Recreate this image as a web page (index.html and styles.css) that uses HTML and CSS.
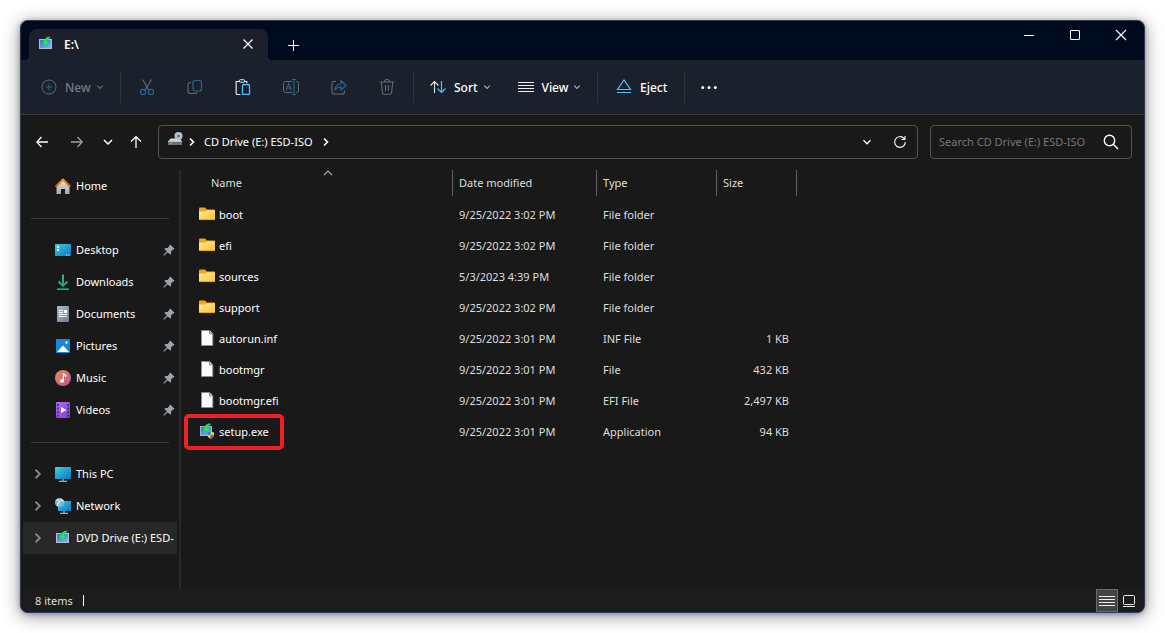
FILE: index.html
```html
<!DOCTYPE html>
<html lang="en">
<head>
<meta charset="utf-8">
<title>E:\</title>
<link rel="stylesheet" href="styles.css">
</head>
<body>
<svg class="sprite" aria-hidden="true">
  <defs>
    <linearGradient id="gScreen" x1="0" y1="0" x2="1" y2="1"><stop offset="0" stop-color="#35d3e0"/><stop offset="1" stop-color="#0f73c4"/></linearGradient>
    <linearGradient id="gInstall" x1="0" y1="0" x2="1" y2="1"><stop offset="0" stop-color="#3f78cc"/><stop offset="1" stop-color="#7db2f2"/></linearGradient>
    <linearGradient id="gFolder" x1="0" y1="0" x2="1" y2="1"><stop offset="0" stop-color="#ffe9a0"/><stop offset="1" stop-color="#fcc234"/></linearGradient>
    <linearGradient id="gGreen" x1="0" y1="0" x2="0" y2="1"><stop offset="0" stop-color="#3ccb88"/><stop offset="1" stop-color="#13a884"/></linearGradient>
    <linearGradient id="gDoc" x1="0" y1="0" x2="1" y2="1"><stop offset="0" stop-color="#a9bccf"/><stop offset="1" stop-color="#64809c"/></linearGradient>
    <linearGradient id="gMusic" x1="0" y1="0" x2="1" y2="1"><stop offset="0" stop-color="#f08a4c"/><stop offset="1" stop-color="#b0599e"/></linearGradient>
    <linearGradient id="gVideo" x1="0" y1="0" x2="1" y2="1"><stop offset="0" stop-color="#b36bf2"/><stop offset="1" stop-color="#7c3fd6"/></linearGradient>
    <linearGradient id="gRoof" x1="0" y1="0" x2="0" y2="1"><stop offset="0" stop-color="#f79a1e"/><stop offset="1" stop-color="#d9530c"/></linearGradient>
    <linearGradient id="gWall" x1="0" y1="0" x2="0" y2="1"><stop offset="0" stop-color="#dedede"/><stop offset="1" stop-color="#a8a8a8"/></linearGradient>
  </defs>
  <symbol id="install" viewBox="0 0 16 16">
    <rect x="1" y="3" width="13" height="10" fill="#b4bfce"/><rect x="2" y="4" width="11" height="8" fill="url(#gInstall)"/>
    <path d="M12 .8C8.500.9 6.300 2.600 6 5.500H3.800L7.500 10l4-4.500H9C9.200 3.800 10 2.600 12 2z" fill="#1ff060" stroke="#16a548" stroke-width=".4"/>
  </symbol>
  <symbol id="setup" viewBox="0 0 16 16">
    <rect x="1" y="3" width="12" height="10" fill="#9fb2cc"/><rect x="2" y="4" width="10" height="8" fill="url(#gInstall)"/>
    <path d="M11.500.5C8 .6 5.800 2.300 5.500 5.200H3.300L7 9.500l4-4.300H8.500c.2-1.700 1-2.900 3-3.500z" fill="#1ff060" stroke="#16a548" stroke-width=".4"/>
    <path d="M8.500 9.500l3.200-1.200V12H8.500z" fill="#2a82dc"/><path d="M11.700 8.300L15 9.500V12h-3.300z" fill="#ffc71f"/>
    <path d="M8.500 12h3.200v4c-2-.8-3.200-2.200-3.200-4z" fill="#ffc71f"/><path d="M15 12h-3.300v4c2-.8 3.300-2.200 3.300-4z" fill="#2a82dc"/>
  </symbol>
  <symbol id="folder" viewBox="0 0 16 16">
    <path d="M0 2.500C0 2 .4 1.500 1 1.500h5l1.800 2H15c.6 0 1 .4 1 1V8H0z" fill="#f0a80c"/>
    <path d="M0 5.500h6.500L8 4.200h8V13c0 .6-.4 1-1 1H1c-.6 0-1-.4-1-1z" fill="url(#gFolder)"/>
    <path d="M.3 13.600h15.400" stroke="#d99a15" stroke-width=".8"/>
  </symbol>
  <symbol id="file" viewBox="0 0 16 16">
    <path d="M2.500.5h8l3.300 3.300v11.700H2.500z" fill="#fafafa" stroke="#8b8b8b"/><path d="M10.500.5v3.300h3.300" fill="#d6d6d6" stroke="#777" stroke-width=".9"/>
  </symbol>
  <symbol id="home" viewBox="0 0 16 16">
    <path d="M1.500 8L8 2.500 14.500 8v8H10v-5H6v5H1.500z" fill="url(#gWall)"/>
    <path d="M1 8.200l7-6.700 7 6.700" fill="none" stroke="url(#gRoof)" stroke-width="1.900" stroke-linecap="round" stroke-linejoin="round"/>
  </symbol>
  <symbol id="desktop" viewBox="0 0 16 16">
    <rect y="2" width="16" height="12" rx="1" fill="url(#gScreen)"/>
    <path d="M2 4h2v2H2zM2 7h2v2H2z" fill="#fff"/><path d="M11 13h1.200M13.300 13h1.200" stroke="#e8f6ff"/>
  </symbol>
  <symbol id="download" viewBox="0 0 16 16">
    <path d="M8 .5v11M3.500 7.500L8 12l4.500-4.500" fill="none" stroke="url(#gGreen)" stroke-width="1.800"/><path d="M2 15.200h12" stroke="#20b783" stroke-width="1.500"/>
  </symbol>
  <symbol id="document" viewBox="0 0 16 16">
    <rect x="2" width="12" height="16" rx="1" fill="url(#gDoc)"/>
    <path d="M4 4.500h4M4 6.500h4M4 8.500h8M4 10.500h8" stroke="#fff"/><rect x="9" y="4" width="3" height="3" fill="#fff"/>
  </symbol>
  <symbol id="picture" viewBox="0 0 16 16">
    <rect x="1" y="1" width="14" height="14" rx="1" fill="#1688d8"/><path d="M2 14l6-6.500 6 6.500z" fill="#fff"/><circle cx="11.500" cy="4.500" r="1.300" fill="#e6f5ff"/>
  </symbol>
  <symbol id="music" viewBox="0 0 16 16">
    <circle cx="8" cy="8" r="8" fill="url(#gMusic)"/><ellipse cx="7" cy="11" rx="2" ry="1.700" fill="#fff"/><path d="M8.400 11V3.500c.4 1.300 1.200 1.600 2.300 1.900V7" fill="none" stroke="#fff" stroke-width="1.200"/>
  </symbol>
  <symbol id="video" viewBox="0 0 16 16">
    <rect x="1" width="14" height="16" rx="1" fill="url(#gVideo)"/><path d="M6 5l5.500 3L6 11z" fill="#fff"/>
    <path d="M2.800 2v13M13.200 2v13" stroke="#43207c" stroke-width="1.600" stroke-dasharray="2 1.600"/>
  </symbol>
  <symbol id="pc" viewBox="0 0 16 16">
    <rect y="1" width="16" height="12" rx=".6" fill="url(#gScreen)"/><path d="M8 13v2M4 15.300h8" stroke="#a3adb5" stroke-width="1.300"/>
  </symbol>
  <symbol id="network" viewBox="0 0 16 16">
    <rect x="3" y="3" width="13" height="10" fill="url(#gScreen)"/><path d="M9 13v2M5 15.300h8" stroke="#a3adb5" stroke-width="1.300"/>
    <circle cx="4.500" cy="4.500" r="4.500" fill="#86b7d1"/><path d="M1.500 2.500C4 1 5.500 3 4 4.500S2 6.500 2.500 8M6 1c0 1.600 1 2 2.600 2" fill="none" stroke="#d8edf5" stroke-width="1.300"/>
  </symbol>
  <symbol id="drive" viewBox="0 0 16 16">
    <path d="M3.500 6.500h9.500l2 3.500H1z" fill="#d2d5d8"/>
    <circle cx="11.500" cy="4" r="4" fill="#b9c1c7"/><circle cx="11.500" cy="4" r="1.300" fill="#56606a"/>
    <path d="M1 9h14v4H1z" fill="#6a7074"/><path d="M1 9.300h14" stroke="#e2e4e6" stroke-width=".8"/><rect x="3" y="10.500" width="2" height="1.200" fill="#35e05c"/>
  </symbol>
  <symbol id="pin" viewBox="0 0 12 12">
    <path d="M7.200.5l4.300 4.300-1 .9-.6-.1-1.800 1.900v2.200l-1 .9-2.400-2.400L1.200 11.500l-.8.100.1-.8 3.300-3.500L1.400 5l.9-1h2.200l1.900-1.900-.1-.6z" fill="#98a4ae"/>
  </symbol>
  <symbol id="chevR" viewBox="0 0 10 10"><path d="M3 1.500L6.500 5 3 8.500" fill="none" stroke="currentColor" stroke-width="1.600"/></symbol>
  <symbol id="chevD" viewBox="0 0 10 10"><path d="M1.500 3.300L5 6.800l3.500-3.500" fill="none" stroke="currentColor" stroke-width="1.300"/></symbol>
</svg>

<div class="window">
  <header class="titlebar">
    <div class="tab">
      <svg class="i16"><use href="#install"/></svg>
      <span class="tab-title">E:\</span>
      <button class="plain" aria-label="Close tab"><svg class="i12" viewBox="0 0 12 12"><path d="M1.500 1.500l9 9M10.500 1.500l-9 9" stroke="#fff" stroke-width="1.200"/></svg></button>
    </div>
    <button class="plain new-tab" aria-label="New tab"><svg class="i12" viewBox="0 0 12 12"><path d="M6.500 1v11M1 6.500h11" stroke="#fff"/></svg></button>
    <div class="caption">
      <button class="plain" aria-label="Minimize"><svg class="i12" viewBox="0 0 12 12"><path d="M1 6.500h10" stroke="#fff"/></svg></button>
      <button class="plain" aria-label="Maximize"><svg class="i12" viewBox="0 0 12 12"><rect x="1.500" y="1.500" width="9" height="9" rx=".5" fill="none" stroke="#fff"/></svg></button>
      <button class="plain" aria-label="Close"><svg class="i12" viewBox="0 0 12 12"><path d="M1 1l10 10M11 1L1 11" stroke="#fff" stroke-width="1.100"/></svg></button>
    </div>
  </header>

  <div class="toolbar">
    <button class="tool new" disabled><svg class="i16" viewBox="0 0 16 16"><circle cx="8" cy="8" r="7" fill="none" stroke="#686b73"/><path d="M8 4.500v7M4.500 8h7" stroke="#28668d"/></svg><span>New</span><svg class="i8"><use href="#chevD"/></svg></button>
    <span class="rule"></span>
    <div class="icon-tools">
      <button class="tool icon" disabled aria-label="Cut"><svg class="i16" viewBox="0 0 16 16"><path d="M3.500.5l6.300 10.500M12.500.5L6.200 11" stroke="#686b73" stroke-width="1.100"/><g fill="none" stroke="#28668d" stroke-width="1.200"><circle cx="4" cy="13" r="2.600"/><circle cx="12" cy="13" r="2.600"/></g></svg></button>
      <button class="tool icon" disabled aria-label="Copy"><svg class="i16" viewBox="0 0 16 16" fill="none"><path d="M4 3.500H3a2 2 0 0 0-2 2V12a2.500 2.500 0 0 0 2.500 2.500H8a2 2 0 0 0 2-1.500" stroke="#686b73" stroke-width="1.100"/><rect x="6" y="1.500" width="8.500" height="10.500" rx="2" stroke="#28668d" stroke-width="1.200"/></svg></button>
      <button class="tool icon" aria-label="Paste"><svg class="i16" viewBox="0 0 16 16" fill="none"><path d="M5.500 15.500h-3a1.300 1.300 0 0 1-1.300-1.300V2.500h3M9.500 2.500h2.300V4" stroke="#e8e8e8" stroke-width="1.200"/><rect x="4.200" y=".7" width="5.600" height="2.500" rx="1.200" stroke="#e8e8e8"/><rect x="7.500" y="5.500" width="7" height="10" rx="1" stroke="#4cc2ff" stroke-width="1.300"/></svg></button>
      <button class="tool icon" disabled aria-label="Rename"><svg class="i16" viewBox="0 0 16 16" fill="none"><path d="M9 2.500H2.500a2 2 0 0 0-2 2v7a2 2 0 0 0 2 2H9M13 2.500h.5a2 2 0 0 1 2 2v7a2 2 0 0 1-2 2H13" stroke="#686b73"/><path d="M9 .5h4M11 .5v15M9 15.500h4M3 11.500l2.700-7 2.700 7M4 9h3.500" stroke="#28668d" stroke-width="1.100"/></svg></button>
      <button class="tool icon" disabled aria-label="Share"><svg class="i16" viewBox="0 0 16 16" fill="none"><path d="M5 2.500H3a2 2 0 0 0-2 2V13a2 2 0 0 0 2 2h8.500a2 2 0 0 0 2-2v-1.500" stroke="#686b73" stroke-width="1.100"/><path d="M4 10.500c.5-3.500 2.500-5.500 6-5.500V1.500l5 5-5 4.500V7.800C7.500 7.800 5.700 8.500 4 10.500z" stroke="#28668d" stroke-width="1.200"/></svg></button>
      <button class="tool icon" disabled aria-label="Delete"><svg class="i16" viewBox="0 0 16 16" fill="none" stroke="#686b73" stroke-width="1.100"><path d="M1 3h14M5.500 3a2.500 2.500 0 0 1 5 0M2.300 3l1.200 11a1.500 1.500 0 0 0 1.500 1.300h6a1.500 1.500 0 0 0 1.500-1.300l1.200-11M6.500 6v6M9.500 6v6"/></svg></button>
    </div>
    <span class="rule"></span>
    <div class="menu-tools">
      <button class="tool"><svg class="i16" viewBox="0 0 16 16" fill="none"><path d="M4.500 14V2.500M.5 6.500l4-4 4 4" stroke="#e8e8e8" stroke-width="1.100"/><path d="M11.500 2v11.500M7.500 9.500l4 4 4-4" stroke="#4cc2ff" stroke-width="1.200"/></svg><span>Sort</span><svg class="i8"><use href="#chevD"/></svg></button>
      <button class="tool"><svg class="i16" viewBox="0 0 16 16"><path d="M0 3.500h16M0 6.500h16M0 9.500h16M0 12.500h16" stroke="#f0f0f0"/></svg><span>View</span><svg class="i8"><use href="#chevD"/></svg></button>
    </div>
    <span class="rule"></span>
    <button class="tool eject"><svg class="i16" viewBox="0 0 16 16" fill="none" stroke="#4cc2ff" stroke-width="1.200"><path d="M8 1L1.500 10.500h13zM1 13.500h14"/></svg><span>Eject</span></button>
    <span class="rule"></span>
    <button class="tool icon" aria-label="See more"><svg class="i16" viewBox="0 0 16 16" fill="#fff"><circle cx="1.700" cy="8.500" r="1.500"/><circle cx="8" cy="8.500" r="1.500"/><circle cx="14.300" cy="8.500" r="1.500"/></svg></button>
  </div>

  <div class="navbar">
    <div class="history">
      <button class="plain" aria-label="Back"><svg class="i12" viewBox="0 0 12 12" fill="none" stroke="#fff" stroke-width="1.300"><path d="M12 6H.8M5.500 1L.8 6l4.700 5"/></svg></button>
      <button class="plain" aria-label="Forward"><svg class="i12" viewBox="0 0 12 12" fill="none" stroke="#a0a0a0" stroke-width="1.300"><path d="M0 6h11.200M6.500 1l4.700 5-4.700 5"/></svg></button>
      <button class="plain narrow" aria-label="Recent locations"><svg class="i10" viewBox="0 0 10 10" fill="none" stroke="#fff" stroke-width="1.500"><path d="M1 3l4 4 4-4"/></svg></button>
      <button class="plain narrow" aria-label="Up"><svg class="i12" viewBox="0 0 12 12" fill="none" stroke="#fff" stroke-width="1.300"><path d="M6 12V.8M1 5.500L6 .8l5 4.700"/></svg></button>
    </div>
    <nav class="address" aria-label="Address">
      <svg class="i16 device"><use href="#drive"/></svg>
      <svg class="i10 crumb"><use href="#chevR"/></svg>
      <a href="#root">CD Drive (E:) ESD-ISO</a>
      <svg class="i10 crumb"><use href="#chevR"/></svg>
      <button class="plain push" aria-label="Previous locations"><svg class="i10"><use href="#chevD"/></svg></button>
      <button class="plain" aria-label="Refresh"><svg class="i14" viewBox="0 0 14 14" fill="none" stroke="#eee" stroke-width="1.200"><path d="M12.300 7A5.300 5.300 0 1 1 10.500 3l1.500 1.500M12 1v3.500H8.500"/></svg></button>
    </nav>
    <label class="search">
      <input type="text" placeholder="Search CD Drive (E:) ESD-ISO" aria-label="Search CD Drive (E:) ESD-ISO">
      <svg class="i16" viewBox="0 0 16 16" fill="none" stroke="#fff" stroke-width="1.400"><circle cx="6.500" cy="6.500" r="5.200"/><path d="M10.500 10.500l4.500 4.500"/></svg>
    </label>
  </div>

  <div class="content">
    <aside class="sidebar">
      <a class="place" href="#home-dir"><span class="twist"></span><svg class="i16"><use href="#home"/></svg><span class="label">Home</span></a>
      <hr>
      <a class="place" href="#desktop-dir"><span class="twist"></span><svg class="i16"><use href="#desktop"/></svg><span class="label">Desktop</span><svg class="i12"><use href="#pin"/></svg></a>
      <a class="place" href="#downloads"><span class="twist"></span><svg class="i16"><use href="#download"/></svg><span class="label">Downloads</span><svg class="i12"><use href="#pin"/></svg></a>
      <a class="place" href="#documents"><span class="twist"></span><svg class="i16"><use href="#document"/></svg><span class="label">Documents</span><svg class="i12"><use href="#pin"/></svg></a>
      <a class="place" href="#pictures"><span class="twist"></span><svg class="i16"><use href="#picture"/></svg><span class="label">Pictures</span><svg class="i12"><use href="#pin"/></svg></a>
      <a class="place" href="#music-dir"><span class="twist"></span><svg class="i16"><use href="#music"/></svg><span class="label">Music</span><svg class="i12"><use href="#pin"/></svg></a>
      <a class="place" href="#videos"><span class="twist"></span><svg class="i16"><use href="#video"/></svg><span class="label">Videos</span><svg class="i12"><use href="#pin"/></svg></a>
      <hr>
      <a class="place" href="#this-pc"><svg class="twist"><use href="#chevR"/></svg><svg class="i16"><use href="#pc"/></svg><span class="label">This PC</span></a>
      <a class="place" href="#net"><svg class="twist"><use href="#chevR"/></svg><svg class="i16"><use href="#network"/></svg><span class="label">Network</span></a>
      <a class="place selected" href="#dvd"><svg class="twist"><use href="#chevR"/></svg><svg class="i16"><use href="#install"/></svg><span class="label">DVD Drive (E:) ESD-</span></a>
    </aside>

    <main class="files">
      <table>
        <colgroup><col class="c-name"><col class="c-date"><col class="c-type"><col class="c-size"></colgroup>
        <thead>
          <tr>
            <th><div class="head first">Name<svg class="sorted i10" viewBox="0 0 10 10"><path d="M1 7l4-4 4 4" fill="none" stroke="#aaa" stroke-width="1.100"/></svg></div></th>
            <th><div class="head">Date modified</div></th>
            <th><div class="head">Type</div></th>
            <th><div class="head">Size</div></th>
          </tr>
        </thead>
        <tbody>
          <tr><td><div class="name"><svg class="i16"><use href="#folder"/></svg>boot</div></td><td>9/25/2022 3:02 PM</td><td>File folder</td><td></td></tr>
          <tr><td><div class="name"><svg class="i16"><use href="#folder"/></svg>efi</div></td><td>9/25/2022 3:02 PM</td><td>File folder</td><td></td></tr>
          <tr><td><div class="name"><svg class="i16"><use href="#folder"/></svg>sources</div></td><td>5/3/2023 4:39 PM</td><td>File folder</td><td></td></tr>
          <tr><td><div class="name"><svg class="i16"><use href="#folder"/></svg>support</div></td><td>9/25/2022 3:02 PM</td><td>File folder</td><td></td></tr>
          <tr><td><div class="name"><svg class="i16"><use href="#file"/></svg>autorun.inf</div></td><td>9/25/2022 3:01 PM</td><td>INF File</td><td>1 KB</td></tr>
          <tr><td><div class="name"><svg class="i16"><use href="#file"/></svg>bootmgr</div></td><td>9/25/2022 3:01 PM</td><td>File</td><td>432 KB</td></tr>
          <tr><td><div class="name"><svg class="i16"><use href="#file"/></svg>bootmgr.efi</div></td><td>9/25/2022 3:01 PM</td><td>EFI File</td><td>2,497 KB</td></tr>
          <tr><td><div class="name"><svg class="i16"><use href="#setup"/></svg>setup.exe<span class="highlight"></span></div></td><td>9/25/2022 3:01 PM</td><td>Application</td><td>94 KB</td></tr>
        </tbody>
      </table>
    </main>
  </div>

  <footer class="status">
    <span class="count">8 items</span>
    <div class="modes">
      <button class="plain active" aria-label="Details view"><svg class="i16" viewBox="0 0 16 16"><path d="M0 3.500h16M0 6.500h16M0 9.500h16M0 12.500h16" stroke="#f0f0f0"/></svg></button>
      <button class="plain" aria-label="Large icons view"><svg class="i12" viewBox="0 0 12 12" fill="none" stroke="#f0f0f0"><rect x=".5" y=".5" width="11" height="9" rx="1"/><path d="M0 11.500h12"/></svg></button>
    </div>
  </footer>
</div>
</body>
</html>
```
FILE: styles.css
```css
* { box-sizing: border-box; }

body {
  margin: 0;
  padding: 20px;
  min-height: 100vh;
  display: flex;
  background: #fff;
  color: #fff;
  font: 11px/16px "Noto Sans", "Open Sans", sans-serif;
}

a { color: inherit; text-decoration: none; }
svg { flex: none; display: block; }
.sprite { position: absolute; width: 0; height: 0; }
.i8 { width: 8px; height: 8px; }
.i10 { width: 10px; height: 10px; }
.i12 { width: 12px; height: 12px; }
.i14 { width: 14px; height: 14px; }
.i16 { width: 16px; height: 16px; }

button { font: inherit; color: inherit; background: none; border: 0; padding: 0; }
.plain { display: flex; align-items: center; justify-content: center; }

.window {
  flex: 1;
  min-width: 0;
  display: flex;
  flex-direction: column;
  overflow: hidden;
  border: 1px solid;
  border-color: #303b48 #2c3850 #2e3b70 #2c3850;
  border-radius: 8px;
  background: #191919;
  box-shadow: 0 1px 5px rgba(0, 0, 0, .3), 0 3px 18px rgba(0, 0, 0, .42);
}

/* Title bar */
.titlebar {
  display: flex;
  height: 39px;
  padding-left: 8px;
  background: #000a1e;
}
.tab {
  position: relative;
  display: flex;
  align-items: center;
  width: 239px;
  margin-top: 8px;
  padding: 0 14px 2px 9px;
  border-radius: 8px 8px 0 0;
  background: #1b202b;
}
.tab::before,
.tab::after {
  content: "";
  position: absolute;
  bottom: 0;
  width: 4px;
  height: 4px;
}
.tab::before { right: 100%; background: radial-gradient(circle at 0 0, transparent 4px, #1b202b 4px); }
.tab::after { left: 100%; background: radial-gradient(circle at 100% 0, transparent 4px, #1b202b 4px); }
.tab-title { flex: 1; padding: 2px 0 0 10px; font-size: 12px; font-weight: 600; }
.new-tab { width: 50px; padding-top: 8px; }
.caption { display: flex; margin-left: auto; height: 28px; }
.caption button { width: 46px; }

/* Command bar */
.toolbar {
  display: flex;
  align-items: center;
  height: 55px;
  padding-left: 12px;
  border-bottom: 1px solid #3b3b3c;
  background: #1b202d;
}
.tool {
  display: flex;
  align-items: center;
  gap: 8px;
  width: 88px;
  height: 32px;
  padding-left: 8px;
  font-size: 12px;
  font-weight: 500;
}
.tool span { padding-top: 2px; }
.tool .i8 { color: #b5b5b8; margin-left: -3px; }
.tool:disabled { color: #777a82; }
.tool:disabled .i8 { color: #686b73; }
.tool.icon { width: 48px; padding: 0; justify-content: center; }
.tool.new { width: 87px; }
.tool.eject { width: 86px; padding-left: 18px; }
.icon-tools { display: flex; padding: 0 2px; }
.menu-tools { display: flex; width: 183px; padding-left: 8px; }
.rule { width: 1px; height: 32px; background: #30343f; }

/* Navigation row */
.navbar {
  display: flex;
  align-items: center;
  height: 55px;
  padding: 0 12px 2px 3px;
}
.history { display: flex; width: 134px; height: 32px; }
.history button { width: 35px; }
.history button.narrow { width: 28px; }
.address,
.search {
  display: flex;
  align-items: center;
  height: 34px;
  border: 1px solid #545454;
  border-radius: 4px;
}
.address { flex: 1; padding: 0 1px 0 8px; }
.address .device { margin-bottom: 3px; }
.address .crumb { margin: 0 7px 0 4px; }
.address a { padding-right: 4px; }
.address .plain { width: 33px; height: 32px; }
.address .push { margin-left: auto; }
.search { width: 202px; margin-left: 12px; padding: 0 12px 0 8px; gap: 8px; }
.search input {
  flex: 1;
  min-width: 0;
  padding: 0;
  border: 0;
  outline: 0;
  background: none;
  color: #fff;
  font: inherit;
}
.search input::placeholder { color: #777; opacity: 1; }

/* Panes */
.content { flex: 1; display: flex; }
.sidebar { width: 160px; padding: 0 2px; border-right: 2px solid #292929; }
.sidebar hr { height: 1px; margin: 16px 8px 15px; border: 0; background: #3b3b3b; }
.place {
  display: flex;
  align-items: center;
  height: 32px;
  overflow: hidden;
  white-space: nowrap;
}
.twist { flex: none; width: 12px; height: 12px; margin: 0 11px 0 9px; color: #858585; }
.label { flex: 1; padding-left: 5px; }
.place .i12 { margin-right: 2px; }
.selected { background: #282828; }

.files { flex: 1; min-width: 0; }
table { width: 616px; table-layout: fixed; border-collapse: collapse; }
.c-name { width: 272px; }
.c-date { width: 144px; }
.c-type { width: 120px; }
.c-size { width: 80px; }
th { height: 29px; padding: 0; vertical-align: top; text-align: left; font-weight: 400; color: #dedede; }
.head {
  position: relative;
  height: 26px;
  padding: 5px 0 0 6px;
  border-right: 1px solid #626262;
}
.head.first { padding-left: 30px; }
.sorted { position: absolute; top: -2px; left: 142px; }
td { height: 31px; padding: 0 8px 0 6px; color: #dedede; white-space: nowrap; }
td:first-child { padding-left: 18px; color: #fff; }
td:last-child { text-align: right; }
.name { position: relative; display: flex; align-items: center; gap: 4px; height: 18px; }
.name .i16 { margin-bottom: 2px; }
.highlight {
  position: absolute;
  top: -9px;
  left: -15px;
  width: 100px;
  height: 36px;
  border: 4px solid #ee2224;
  border-radius: 5px;
}

/* Status bar */
.status {
  display: flex;
  align-items: center;
  justify-content: space-between;
  height: 23px;
  padding: 0 4px 0 14px;
  background: #1c1c1c;
}
.count { display: flex; align-items: center; gap: 10px; color: #dedede; }
.count::after { content: ""; width: 1px; height: 11px; background: #fff; }
.modes { display: flex; }
.modes button { width: 22px; height: 23px; }
.modes .active { border: 1px solid #6b6b6b; background: #444; }
```
